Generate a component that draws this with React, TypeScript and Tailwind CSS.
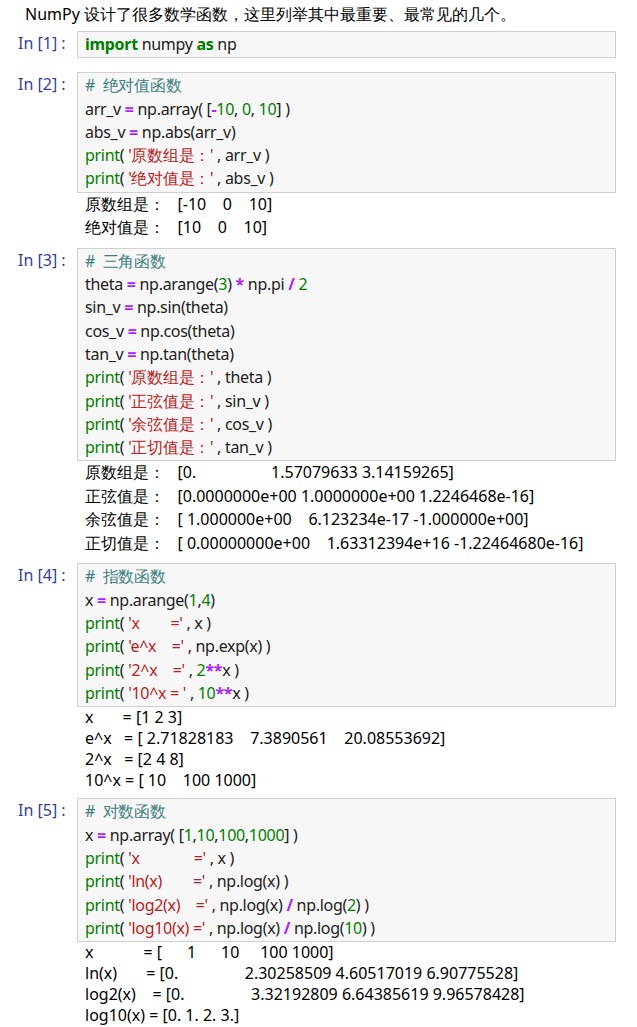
import React from 'react';

type Tok = [string, string?];

const K = 'text-[#008000] font-bold';
const F = 'text-[#008000]';
const N = 'text-[#008000]';
const S = 'text-[#ba2121]';
const O = 'text-[#aa22ff] font-bold';
const C = 'text-[#408080]';

function Code({ lines }: { lines: Tok[][] }) {
  return (
    <div className="flex-1 bg-[#f7f7f7] border border-[#cfcfcf] px-[7px] py-[1px] font-[family-name:Roboto,'Noto_Sans_CJK_SC',sans-serif] text-[16px] leading-[23.3px] text-[#212121] tracking-[-0.3px]">
      {lines.map((l, i) => (
        <div key={i} className="whitespace-pre">
          {l.map(([t, c], j) => (
            <span key={j} className={c}>{t}</span>
          ))}
        </div>
      ))}
    </div>
  );
}

function Cell({ n, lines, out, outLh = 'leading-[23.5px]' }: { n: number; lines: Tok[][]; out?: string[]; outLh?: string }) {
  return (
    <div className="mb-[8px]">
      <div className="flex">
        <div className="w-[77px] pl-[18px] pt-[1px] font-[family-name:'Liberation_Serif',serif] text-[16px] leading-[23px] text-[#303f9f] whitespace-pre">
          In [{n}] :
        </div>
        <Code lines={lines} />
      </div>
      {out && (
        <div className={`pl-[85px] font-[family-name:'Liberation_Serif','Noto_Sans_CJK_SC',serif] text-[16px] ${outLh} text-black whitespace-pre`}>
          {out.map((o, i) => <div key={i}>{o}</div>)}
        </div>
      )}
    </div>
  );
}

const pr = (s: string, rest: Tok[]): Tok[] => [['print', F], ['( '], [s, S], ...rest];

export default function App() {
  return (
    <div className="w-[637px] h-[1027px] bg-white pr-[21px] overflow-hidden">
      <div className="pl-[25px] pt-[3px] pb-[6px] font-[family-name:'Liberation_Serif','Noto_Sans_CJK_SC',serif] text-[16px] leading-[22px]">
        NumPy 设计了很多数学函数，这里列举其中最重要、最常见的几个。
      </div>
      <div className="mb-[14px]">
        <div className="flex">
          <div className="w-[77px] pl-[18px] pt-[1px] font-[family-name:'Liberation_Serif',serif] text-[16px] leading-[23px] text-[#303f9f] whitespace-pre">In [1] :</div>
          <Code lines={[[['import', K], [' numpy '], ['as', K], [' np']]]} />
        </div>
      </div>
      <Cell
        n={2}
        lines={[
          [['#  绝对值函数', C]],
          [['arr_v '], ['=', O], [' np.array( ['], ['-', O], ['10', N], [', '], ['0', N], [', '], ['10', N], ['] )']],
          [['abs_v '], ['=', O], [' np.abs(arr_v)']],
          pr("'原数组是：'", [[' , arr_v )']]),
          pr("'绝对值是：'", [[' , abs_v )']]),
        ]}
        out={['原数组是：   [-10    0    10]', '绝对值是：   [10    0    10]']}
      />
      <Cell
        n={3}
        lines={[
          [['#  三角函数', C]],
          [['theta '], ['=', O], [' np.arange('], ['3', N], [') '], ['*', O], [' np.pi '], ['/', O], [' '], ['2', N]],
          [['sin_v '], ['=', O], [' np.sin(theta)']],
          [['cos_v '], ['=', O], [' np.cos(theta)']],
          [['tan_v '], ['=', O], [' np.tan(theta)']],
          pr("'原数组是：'", [[' , theta )']]),
          pr("'正弦值是：'", [[' , sin_v )']]),
          pr("'余弦值是：'", [[' , cos_v )']]),
          pr("'正切值是：'", [[' , tan_v )']]),
        ]}
        out={[
          '原数组是：   [0.                  1.57079633 3.14159265]',
          '正弦值是：   [0.0000000e+00 1.0000000e+00 1.2246468e-16]',
          '余弦值是：   [ 1.000000e+00    6.123234e-17 -1.000000e+00]',
          '正切值是：   [ 0.00000000e+00    1.63312394e+16 -1.22464680e-16]',
        ]}
      />
      <Cell
        n={4}
        lines={[
          [['#  指数函数', C]],
          [['x '], ['=', O], [' np.arange('], ['1', N], [','], ['4', N], [')']],
          pr("'x        ='", [[' , x )']]),
          pr("'e^x    ='", [[' , np.exp(x) )']]),
          pr("'2^x    ='", [[' , '], ['2', N], ['**', O], ['x )']]),
          pr("'10^x = '", [[' , '], ['10', N], ['**', O], ['x )']]),
        ]}
        out={['x       = [1 2 3]', 'e^x   = [ 2.71828183    7.3890561    20.08553692]', '2^x   = [2 4 8]', '10^x = [ 10    100 1000]']}
        outLh="leading-[20.8px]"
      />
      <Cell
        n={5}
        lines={[
          [['#  对数函数', C]],
          [['x '], ['=', O], [' np.array( ['], ['1', N], [','], ['10', N], [','], ['100', N], [','], ['1000', N], ['] )']],
          pr("'x              ='", [[' , x )']]),
          pr("'ln(x)        ='", [[' , np.log(x) )']]),
          pr("'log2(x)    ='", [[' , np.log(x) '], ['/', O], [' np.log('], ['2', N], [') )']]),
          pr("'log10(x) ='", [[' , np.log(x) '], ['/', O], [' np.log('], ['10', N], [') )']]),
        ]}
        out={[
          'x            = [      1      10     100 1000]',
          'ln(x)       = [0.                2.30258509 4.60517019 6.90775528]',
          'log2(x)    = [0.                3.32192809 6.64385619 9.96578428]',
          'log10(x) = [0. 1. 2. 3.]',
        ]}
        outLh="leading-[20.8px]"
      />
    </div>
  );
}
